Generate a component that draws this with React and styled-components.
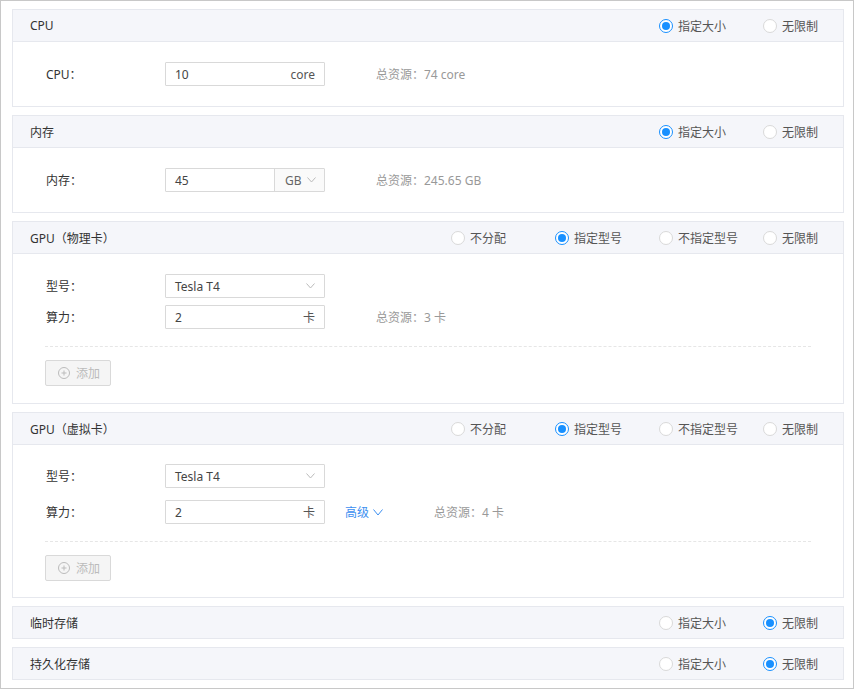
import React from "react";
import styled, { createGlobalStyle } from "styled-components";

const Global = createGlobalStyle`
  html, body { margin: 0; padding: 0; background: #fff; }
  body { font-family: "Noto Sans", "Noto Sans CJK SC", sans-serif; font-size: 12px; color: #333; }
  * { box-sizing: border-box; }
`;

const Frame = styled.div`
  width: 854px;
  height: 689px;
  border: 1px solid #c8c8c8;
  padding: 8px 9px 0 11px;
  display: flex;
  flex-direction: column;
  gap: 8px;
`;

const Card = styled.section`
  border: 1px solid #e6e8ee;
  background: #fff;
`;

const Header = styled.div`
  height: ${(p) => (p.$bodyless ? "31px" : "32px")};
  background: #f5f6fa;
  border-bottom: ${(p) => (p.$bodyless ? "none" : "1px solid #e6e8ee")};
  display: flex;
  align-items: center;
  padding-left: 17px;
`;

const Title = styled.div`
  flex: 1;
  color: #333;
  font-size: 12px;
`;

const RadioGroup = styled.div`
  display: flex;
  gap: 24px;
`;

const RadioItem = styled.label`
  width: 80px;
  display: flex;
  align-items: center;
  gap: 5px;
  color: #555;
  font-size: 12px;
`;

const Circle = styled.span`
  width: 14px;
  height: 14px;
  border-radius: 50%;
  border: 1px solid ${(p) => (p.$on ? "#1890ff" : "#d9d9d9")};
  background: #fff;
  display: flex;
  align-items: center;
  justify-content: center;
  &::after {
    content: "";
    width: 8px;
    height: 8px;
    border-radius: 50%;
    background: ${(p) => (p.$on ? "#1890ff" : "transparent")};
  }
`;

const Body = styled.div`
  padding: ${(p) => p.$pad || "20px 32px"};
  display: flex;
  flex-direction: column;
`;

const Row = styled.div`
  display: flex;
  align-items: center;
  height: 24px;
  margin-top: ${(p) => p.$mt || "0"};
`;

const Label = styled.div`
  width: 120px;
  color: #333;
  padding-left: 1px;
`;

const Field = styled.div`
  width: 160px;
  height: 24px;
  border: 1px solid #d9d9d9;
  border-radius: 1px;
  display: flex;
  align-items: center;
  background: #fff;
  color: #444;
`;

const FieldValue = styled.span`
  flex: 1;
  padding-left: 9px;
`;

const Suffix = styled.span`
  padding-right: 9px;
  color: #555;
`;

const Addon = styled.span`
  width: 50px;
  height: 100%;
  border-left: 1px solid #d9d9d9;
  background: #fafafa;
  display: flex;
  align-items: center;
  gap: 5px;
  padding-left: 10px;
  color: #666;
`;

const Arrow = styled.span`
  padding-right: 9px;
  display: flex;
`;

const Total = styled.span`
  margin-left: 51px;
  color: #999;
`;

const Link = styled.span`
  margin-left: 20px;
  color: #3d8ff0;
  display: flex;
  align-items: center;
  gap: 4px;
`;

const Divider = styled.div`
  border-top: 1px dashed #e6e6e6;
  margin: 17px 0 13px;
`;

const AddButton = styled.button`
  width: 66px;
  height: 26px;
  border: 1px solid #d9d9d9;
  border-radius: 2px;
  background: #f5f5f5;
  color: #bbb;
  font: inherit;
  display: flex;
  align-items: center;
  gap: 6px;
  padding: 0 0 0 12px;
`;

const Chevron = ({ color = "#bbb", w = 9, h = 5 }) => (
  <svg width={w} height={h + 1} viewBox={`0 0 ${w} ${h + 1}`} fill="none">
    <polyline points={`0.5,0.5 ${w / 2},${h} ${w - 0.5},0.5`} stroke={color} strokeWidth="1" />
  </svg>
);

const PlusCircle = () => (
  <svg width="12" height="12" viewBox="0 0 12 12" fill="none">
    <circle cx="6" cy="6" r="5.5" stroke="#bbb" />
    <line x1="3.5" y1="6" x2="8.5" y2="6" stroke="#bbb" />
    <line x1="6" y1="3.5" x2="6" y2="8.5" stroke="#bbb" />
  </svg>
);

const Radios = ({ options, value }) => (
  <RadioGroup>
    {options.map((o) => (
      <RadioItem key={o}>
        <Circle $on={o === value} />
        {o}
      </RadioItem>
    ))}
  </RadioGroup>
);

const SIZE = ["指定大小", "无限制"];
const GPU = ["不分配", "指定型号", "不指定型号", "无限制"];

const GpuBody = ({ total, advanced, gap, pad }) => (
  <Body $pad={pad}>
    <Row>
      <Label>型号：</Label>
      <Field>
        <FieldValue>Tesla T4</FieldValue>
        <Arrow><Chevron /></Arrow>
      </Field>
    </Row>
    <Row $mt={gap}>
      <Label>算力：</Label>
      <Field>
        <FieldValue>2</FieldValue>
        <Suffix>卡</Suffix>
      </Field>
      {advanced && (
        <Link>
          高级
          <Chevron color="#3d8ff0" w={10} h={6} />
        </Link>
      )}
      <Total>总资源：{total}</Total>
    </Row>
    <Divider />
    <AddButton>
      <PlusCircle />
      添加
    </AddButton>
  </Body>
);

export default function App() {
  return (
    <>
      <Global />
      <Frame>
        <Card>
          <Header>
            <Title>CPU</Title>
            <Radios options={SIZE} value="指定大小" />
          </Header>
          <Body>
            <Row>
              <Label>CPU：</Label>
              <Field>
                <FieldValue>10</FieldValue>
                <Suffix>core</Suffix>
              </Field>
              <Total>总资源：74 core</Total>
            </Row>
          </Body>
        </Card>

        <Card>
          <Header>
            <Title>内存</Title>
            <Radios options={SIZE} value="指定大小" />
          </Header>
          <Body>
            <Row>
              <Label>内存：</Label>
              <Field>
                <FieldValue>45</FieldValue>
                <Addon>
                  GB
                  <Chevron />
                </Addon>
              </Field>
              <Total>总资源：245.65 GB</Total>
            </Row>
          </Body>
        </Card>

        <Card>
          <Header>
            <Title>GPU（物理卡）</Title>
            <Radios options={GPU} value="指定型号" />
          </Header>
          <GpuBody total="3 卡" gap="7px" pad="20px 32px 17px" />
        </Card>

        <Card>
          <Header>
            <Title>GPU（虚拟卡）</Title>
            <Radios options={GPU} value="指定型号" />
          </Header>
          <GpuBody total="4 卡" advanced gap="12px" pad="19px 32px 16px" />
        </Card>

        <Card>
          <Header $bodyless>
            <Title>临时存储</Title>
            <Radios options={SIZE} value="无限制" />
          </Header>
        </Card>

        <Card>
          <Header $bodyless>
            <Title>持久化存储</Title>
            <Radios options={SIZE} value="无限制" />
          </Header>
        </Card>
      </Frame>
    </>
  );
}
